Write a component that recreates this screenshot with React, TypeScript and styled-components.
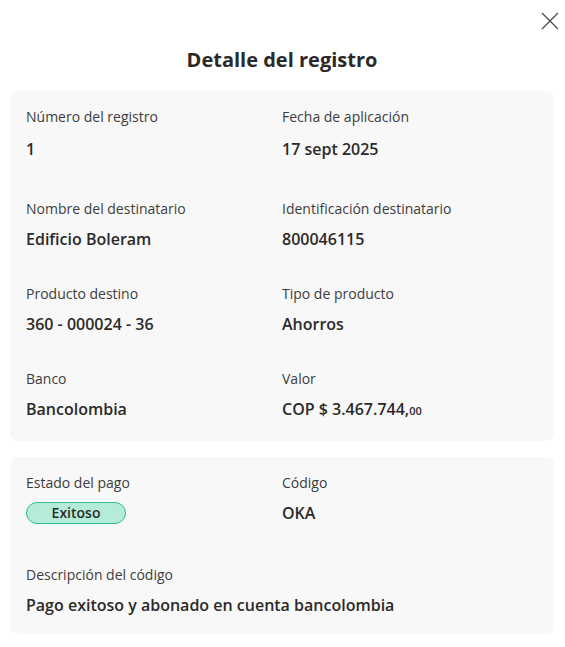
import React from 'react';
import styled, { createGlobalStyle } from 'styled-components';

const GlobalStyle = createGlobalStyle`
  body {
    margin: 0;
    background: #ffffff;
    font-family: "Open Sans", "Noto Sans", sans-serif;
    color: #2c2a29;
  }
`;

const Modal = styled.div`
  width: 565px;
  box-sizing: border-box;
  padding: 0 11px 14px 10px;
  display: flex;
  flex-direction: column;
`;

const TopBar = styled.div`
  display: flex;
  justify-content: flex-end;
  height: 46px;
  padding-top: 10px;
  box-sizing: border-box;
`;

const CloseButton = styled.button`
  width: 22px;
  height: 22px;
  margin-right: -7px;
  padding: 0;
  border: none;
  background: transparent;
  cursor: pointer;
  color: #4a4a4a;
  display: flex;
  align-items: center;
  justify-content: center;
`;

const Title = styled.h1`
  margin: 0 0 17px;
  font-size: 20px;
  line-height: 28px;
  font-weight: 700;
  text-align: center;
  color: #2c2a29;
`;

const Card = styled.section<{ $bottom?: number }>`
  background: #f8f8f8;
  border-radius: 8px;
  padding: 16px 16px ${(p) => p.$bottom ?? 18}px;
  display: grid;
  grid-template-columns: 1fr 1fr;
  row-gap: 33px;
  & + & {
    margin-top: 16px;
  }
`;

const Field = styled.div<{ $wide?: boolean; $extra?: number; $gap?: number }>`
  grid-column: ${(p) => (p.$wide ? '1 / span 2' : 'auto')};
  margin-bottom: ${(p) => p.$extra ?? 0}px;
  display: flex;
  flex-direction: column;
  gap: ${(p) => p.$gap ?? 8}px;
`;

const Label = styled.span`
  font-size: 14px;
  line-height: 20px;
  color: #3d3d3d;
`;

const Value = styled.span`
  font-size: 16px;
  line-height: 24px;
  font-weight: 600;
  color: #2c2a29;
`;

const Cents = styled.span`
  font-size: 11px;
`;

const Badge = styled.span`
  align-self: flex-start;
  width: 100px;
  height: 22px;
  box-sizing: border-box;
  margin: 1px 0;
  border: 1px solid #2fbf93;
  border-radius: 11px;
  background: #b5ecd9;
  font-size: 14px;
  font-weight: 600;
  line-height: 20px;
  text-align: center;
  color: #2c2a29;
`;

type Item = { label: string; value: React.ReactNode };

const rows: Item[][] = [
  [
    { label: 'Número del registro', value: '1' },
    { label: 'Fecha de aplicación', value: '17 sept 2025' },
  ],
  [
    { label: 'Nombre del destinatario', value: 'Edificio Boleram' },
    { label: 'Identificación destinatario', value: '800046115' },
  ],
  [
    { label: 'Producto destino', value: '360 - 000024 - 36' },
    { label: 'Tipo de producto', value: 'Ahorros' },
  ],
  [
    { label: 'Banco', value: 'Bancolombia' },
    {
      label: 'Valor',
      value: (
        <>
          COP $ 3.467.744,<Cents>00</Cents>
        </>
      ),
    },
  ],
];

const App = () => (
  <Modal>
    <GlobalStyle />
    <TopBar>
      <CloseButton aria-label="Cerrar">
        <svg width="18" height="18" viewBox="0 0 18 18" fill="none">
          <path d="M1 1L17 17M17 1L1 17" stroke="currentColor" strokeWidth="1.2" />
        </svg>
      </CloseButton>
    </TopBar>
    <Title>Detalle del registro</Title>
    <Card>
      {rows.map((row, i) =>
        row.map((item) => (
          <Field
            key={item.label}
            $extra={i === 0 ? 5 : 0}
            $gap={i === 0 ? 10 : 8}
          >
            <Label>{item.label}</Label>
            <Value>{item.value}</Value>
          </Field>
        ))
      )}
    </Card>
    <Card $bottom={17}>
      <Field $extra={7}>
        <Label>Estado del pago</Label>
        <Badge>Exitoso</Badge>
      </Field>
      <Field $extra={7}>
        <Label>Código</Label>
        <Value>OKA</Value>
      </Field>
      <Field $wide>
        <Label>Descripción del código</Label>
        <Value>Pago exitoso y abonado en cuenta bancolombia</Value>
      </Field>
    </Card>
  </Modal>
);

export default App;
